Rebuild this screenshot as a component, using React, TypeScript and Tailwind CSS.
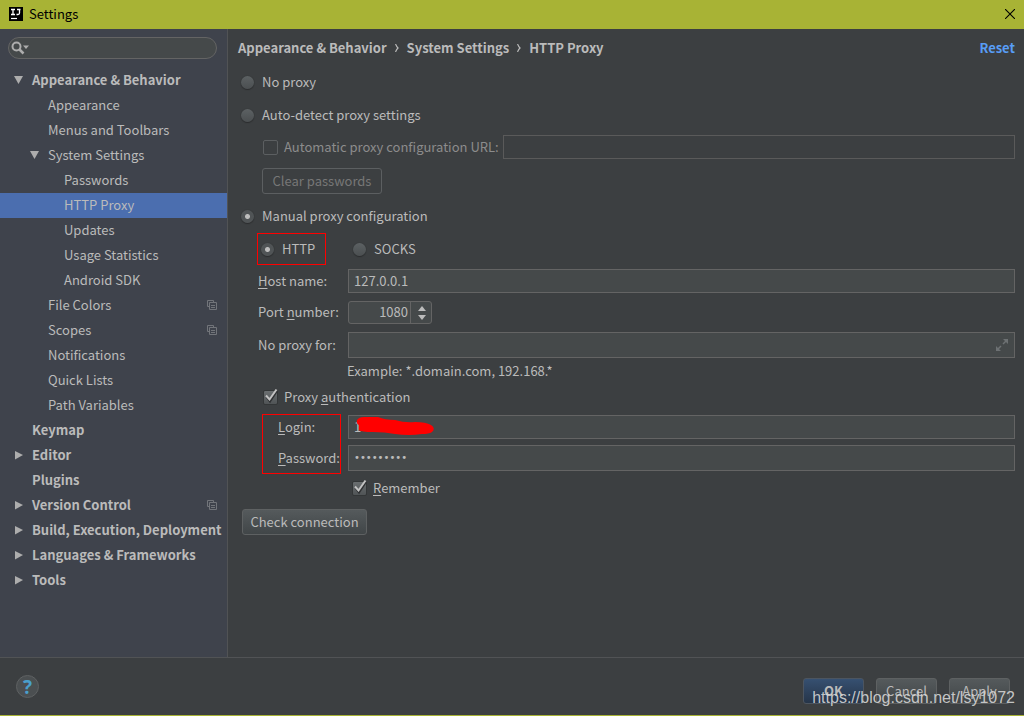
import React, { useState } from "react";

type Item = {
  label: string;
  depth: 0 | 1 | 2;
  bold?: boolean;
  arrow?: "open" | "closed";
  copy?: boolean;
  selected?: boolean;
};

const items: Item[] = [
  { label: "Appearance & Behavior", depth: 0, bold: true, arrow: "open" },
  { label: "Appearance", depth: 1 },
  { label: "Menus and Toolbars", depth: 1 },
  { label: "System Settings", depth: 1, arrow: "open" },
  { label: "Passwords", depth: 2 },
  { label: "HTTP Proxy", depth: 2, selected: true },
  { label: "Updates", depth: 2 },
  { label: "Usage Statistics", depth: 2 },
  { label: "Android SDK", depth: 2 },
  { label: "File Colors", depth: 1, copy: true },
  { label: "Scopes", depth: 1, copy: true },
  { label: "Notifications", depth: 1 },
  { label: "Quick Lists", depth: 1 },
  { label: "Path Variables", depth: 1 },
  { label: "Keymap", depth: 0, bold: true },
  { label: "Editor", depth: 0, bold: true, arrow: "closed" },
  { label: "Plugins", depth: 0, bold: true },
  { label: "Version Control", depth: 0, bold: true, arrow: "closed", copy: true },
  { label: "Build, Execution, Deployment", depth: 0, bold: true, arrow: "closed" },
  { label: "Languages & Frameworks", depth: 0, bold: true, arrow: "closed" },
  { label: "Tools", depth: 0, bold: true, arrow: "closed" },
];

const indent = { 0: "pl-3", 1: "pl-7", 2: "pl-11" };

function TreeArrow({ kind }: { kind?: "open" | "closed" }) {
  return (
    <svg className="mr-2 size-3 shrink-0" viewBox="0 0 12 12" fill="#adadad" aria-hidden="true">
      {kind === "open" && <path d="M2 2h9L6.500 10z" />}
      {kind === "closed" && <path d="M3 2v8.500L11 6z" />}
    </svg>
  );
}

function CopyIcon() {
  return (
    <svg className="size-[10px] shrink-0" viewBox="0 0 10 10" fill="none" stroke="#72757a" aria-hidden="true">
      <path d="M2 6.500H.5v-6h6V2M2.500 2.500h7v7h-7zM4 5.500h4M4 7.500h4" />
    </svg>
  );
}

function Crumb({ children }: { children: React.ReactNode }) {
  return (
    <>
      <svg className="mx-2 h-2 w-1" viewBox="0 0 4 8" fill="none" stroke="#bbbbbb" strokeWidth="1.200" aria-hidden="true">
        <path d="M.5 0Q1.500 2.500 3 4Q1.500 5.500 .5 8" />
      </svg>
      <span>{children}</span>
    </>
  );
}

const field =
  "min-w-0 border border-[#646464] bg-[#45494a] px-[5px] pb-px text-[#bbbbbb] outline-none";
const button =
  "h-[26px] rounded-[3px] border border-[#5e6162] bg-linear-to-b from-[#555a5c] to-[#414648] text-center";

function Radio({
  id,
  name,
  label,
  defaultChecked,
}: {
  id: string;
  name: string;
  label: string;
  defaultChecked?: boolean;
}) {
  return (
    <div className="flex items-center">
      <input
        id={id}
        type="radio"
        name={name}
        defaultChecked={defaultChecked}
        className="mr-2 size-[13px] shrink-0 appearance-none rounded-full bg-linear-to-b from-[#5c6163] to-[#4b4f51] shadow-[0_1px_1px_#2b2d2e,0_0_1px_#2b2d2e] checked:bg-[radial-gradient(circle,#bdbdbd_2px,#505456_3px)]"
      />
      <label htmlFor={id}>{label}</label>
    </div>
  );
}

function Check({
  id,
  children,
  defaultChecked,
  disabled,
}: {
  id: string;
  children: React.ReactNode;
  defaultChecked?: boolean;
  disabled?: boolean;
}) {
  return (
    <div className="flex items-center">
      <span className="relative mr-[6px] flex">
        <input
          id={id}
          type="checkbox"
          defaultChecked={defaultChecked}
          disabled={disabled}
          className="peer size-[15px] appearance-none rounded-[2px] border border-[#333637] bg-linear-to-b from-[#6a6e70] to-[#505456] disabled:border-[#5c5f61] disabled:bg-none"
        />
        <svg
          className="pointer-events-none absolute -top-[2px] left-0 hidden h-[17px] w-[16px] peer-checked:block"
          viewBox="0 0 16 17"
          fill="none"
          aria-hidden="true"
        >
          <path d="M3.500 9l3.500 4.500L14 3" stroke="#303234" strokeWidth="2" />
          <path d="M3 7.500l3.500 4L13.500 1.500" stroke="#c2c2c2" strokeWidth="2" />
        </svg>
      </span>
      <label htmlFor={id} className={disabled ? "text-[#8c8c8c]" : ""}>
        {children}
      </label>
    </div>
  );
}

export default function App() {
  const [port, setPort] = useState(1080);

  return (
    <div className="flex min-h-screen flex-col border-b border-[#a8b335] bg-[#3c3f41] font-['Noto_Sans_CJK_SC','Noto_Sans',sans-serif] text-[13px] leading-5 text-[#bbbbbb]">
      <header className="flex h-[29px] items-center bg-[#a8b335] pr-2 pb-[2px] pl-[9px] text-black">
        <svg className="mr-[6px] size-[14px]" viewBox="0 0 14 14" aria-hidden="true">
          <path d="M0 0h14v14H0z" fill="#000" />
          <path d="M2 2.500h4M4 2.500v5M2 7.500h4M8 2.500h3.500M10.500 2.500v3.500q0 1.500-1.500 1.500H7.500" fill="none" stroke="#fff" strokeWidth="1.300" />
          <path d="M2 11.500h6" stroke="#fff" strokeWidth="1.200" />
        </svg>
        <h1 className="flex-1">Settings</h1>
        <button type="button" aria-label="Close" className="p-px">
          <svg className="size-[10px]" viewBox="0 0 10 10" stroke="#000" strokeWidth="1.100" aria-hidden="true">
            <path d="M0 0l10 10M10 0L0 10" />
          </svg>
        </button>
      </header>

      <div className="flex flex-1">
        <aside className="w-[228px] shrink-0 border-r border-[#515355] bg-[#3f434c] pt-2">
          <div className="mr-[10px] ml-2 flex h-[22px] items-center rounded-full border border-[#646464] bg-[#45494a] pl-[2px]">
            <svg className="h-[14px] w-[19px] shrink-0" viewBox="0 0 19 14" aria-hidden="true">
              <circle cx="5.500" cy="5.500" r="4" fill="none" stroke="#adadad" strokeWidth="2" />
              <path d="M8.500 8.500l4 4" stroke="#adadad" strokeWidth="2.500" />
              <path d="M12 4.500h6l-3 3.500z" fill="#adadad" />
            </svg>
            <input type="search" aria-label="Search settings" className="min-w-0 flex-1 bg-transparent outline-none" />
          </div>
          <nav aria-label="Settings" className="mt-[9px]">
            {items.map((it) => (
              <a
                key={it.label}
                href="#"
                aria-current={it.selected ? "page" : undefined}
                className={`flex h-[25px] items-center pr-[10px] pb-[2px] whitespace-nowrap ${indent[it.depth]} ${it.bold ? "font-bold" : ""} ${it.selected ? "bg-[#4b6eaf]" : ""}`}
              >
                <TreeArrow kind={it.arrow} />
                <span className="flex-1">{it.label}</span>
                {it.copy && <CopyIcon />}
              </a>
            ))}
          </nav>
        </aside>

        <main className="min-w-0 flex-1 pt-[9px] pr-[9px] pl-[10px]">
          <div className="flex items-center justify-between font-bold">
            <div className="flex items-center">
              <span>Appearance &amp; Behavior</span>
              <Crumb>System Settings</Crumb>
              <Crumb>HTTP Proxy</Crumb>
            </div>
            <button type="button" className="text-[#589df6]">Reset</button>
          </div>

          <form className="pl-[3px]" onSubmit={(e) => e.preventDefault()}>
            <div className="mt-[14px]">
              <Radio id="none" name="mode" label="No proxy" />
            </div>
            <div className="mt-[13px]">
              <Radio id="auto" name="mode" label="Auto-detect proxy settings" />
            </div>
            <div className="mt-[10px] flex items-center pl-[22px]">
              <Check id="pac" disabled>Automatic proxy configuration URL:</Check>
              <input
                aria-label="Automatic proxy configuration URL"
                disabled
                className="ml-1 h-6 min-w-0 flex-1 border border-[#5a5a5a] bg-transparent px-[5px]"
              />
            </div>
            <button
              type="button"
              disabled
              className="mt-[9px] ml-[21px] block h-[26px] w-[120px] rounded-[3px] border border-[#5c5f61] text-[#777777]"
            >
              Clear passwords
            </button>
            <div className="mt-3">
              <Radio id="manual" name="mode" label="Manual proxy configuration" defaultChecked />
            </div>

            <div className="pl-4">
              <div className="mt-[7px] flex items-center">
                <div className="flex h-8 w-[69px] items-center border border-[#ff0000] pl-[3px]">
                  <Radio id="http" name="type" label="HTTP" defaultChecked />
                </div>
                <div className="ml-[27px]">
                  <Radio id="socks" name="type" label="SOCKS" />
                </div>
              </div>

              <div className="mt-1 flex items-center">
                <label htmlFor="host" className="w-[91px] pb-px pl-px"><u className="underline-offset-2">H</u>ost name:</label>
                <input id="host" defaultValue="127.0.0.1" className={`${field} h-6 flex-1`} />
              </div>
              <div className="mt-2 flex items-center">
                <label htmlFor="port" className="w-[91px] pb-px pl-px">Port <u className="underline-offset-2">n</u>umber:</label>
                <div className="flex h-[23px] w-[84px] rounded-[3px] border border-[#646464] bg-[#45494a]">
                  <input
                    id="port"
                    value={port}
                    onChange={(e) => setPort(Number(e.target.value) || 0)}
                    className="w-[62px] min-w-0 border-r border-[#646464] bg-transparent pr-[2px] pb-px text-right outline-none"
                  />
                  <div className="flex flex-1 flex-col items-center justify-center gap-1 pl-px">
                    <button type="button" aria-label="Increase port" onClick={() => setPort(port + 1)}>
                      <svg className="h-[5px] w-2" viewBox="0 0 8 5" fill="#bbbbbb" aria-hidden="true"><path d="M0 5h8L4 0z" /></svg>
                    </button>
                    <button type="button" aria-label="Decrease port" onClick={() => setPort(port - 1)}>
                      <svg className="h-[5px] w-2" viewBox="0 0 8 5" fill="#bbbbbb" aria-hidden="true"><path d="M0 0h8L4 5z" /></svg>
                    </button>
                  </div>
                </div>
              </div>
              <div className="mt-2 flex items-center">
                <label htmlFor="skip" className="w-[91px] pb-px pl-px">No proxy for:</label>
                <div className="flex h-[26px] min-w-0 flex-1 items-center border border-[#646464] bg-[#45494a] pr-[6px]">
                  <input id="skip" className="min-w-0 flex-1 bg-transparent px-[5px] outline-none" />
                  <button type="button" aria-label="Expand field">
                    <svg className="size-3" viewBox="0 0 12 12" fill="#6d7173" stroke="#6d7173" aria-hidden="true">
                      <path d="M7 0h5v5zM0 7v5h5z" stroke="none" />
                      <path d="M10 2L7 5M2 10l3-3" strokeWidth="1.500" />
                    </svg>
                  </button>
                </div>
              </div>
              <p className="mt-[3px] ml-[90px]">Example: *.domain.com, 192.168.*</p>

              <div className="mt-[6px] pl-[6px]">
                <Check id="auth" defaultChecked>Proxy <u className="underline-offset-2">a</u>uthentication</Check>
              </div>

              <div className="relative mt-2 flex flex-col gap-[6px]">
                <div className="flex items-center">
                  <label htmlFor="login" className="w-[91px] pb-px pl-[21px]"><u className="underline-offset-2">L</u>ogin:</label>
                  <div className="relative flex min-w-0 flex-1">
                    <input id="login" defaultValue="1" className={`${field} h-6 flex-1`} />
                    <svg className="pointer-events-none absolute top-[2px] left-2 h-[19px] w-[78px]" viewBox="0 0 78 19" fill="#ff0000" aria-hidden="true">
                      <path d="M1 3Q3 0 8 0L22 0Q29 3 39 3Q49 6 59 5Q70 5 75 8Q80 11 76 15Q73 17 66 17Q53 19 39 17Q29 15 17 15Q5 15 3 13L3 8Q0 7 1 3z" />
                    </svg>
                  </div>
                </div>
                <div className="flex items-center">
                  <label htmlFor="password" className="w-[91px] pb-px pl-[21px]"><u className="underline-offset-2">P</u>assword:</label>
                  <input
                    id="password"
                    type="password"
                    defaultValue="123456789"
                    className={`${field} h-[26px] flex-1 font-['DejaVu_Sans',sans-serif] text-[10px]`}
                  />
                </div>
                <div className="pointer-events-none absolute -top-px left-[5px] h-[60px] w-[79px] border border-[#ff0000]" />
              </div>

              <div className="mt-[7px] pl-[95px]">
                <Check id="remember" defaultChecked><u className="underline-offset-2">R</u>emember</Check>
              </div>
            </div>

            <button type="button" className={`${button} mt-[11px] ml-px block w-[125px]`}>Check connection</button>
          </form>
        </main>
      </div>

      <footer className="relative flex h-[58px] items-center border-t border-[#515355] pr-[14px] pl-4">
        <button
          type="button"
          aria-label="Help"
          className="size-[23px] rounded-full border border-[#5e6162] bg-[#4b4f51] font-['Open_Sans',sans-serif] text-[19px] leading-5 font-bold text-[#4a9fcc]"
        >
          ?
        </button>
        <div className="ml-auto flex gap-3 pt-2">
          <button type="button" className="h-[26px] w-[61px] rounded-[3px] border border-[#4c5560] bg-linear-to-b from-[#365071] to-[#263549] font-bold">OK</button>
          <button type="button" className={`${button} w-[61px]`}>Cancel</button>
          <button type="button" className={`${button} w-[61px]`}>Apply</button>
        </div>
        <span className="pointer-events-none absolute right-[9px] bottom-[7px] font-['Liberation_Sans',sans-serif] text-[16px] text-[#d6d6d6]/90">
          https://blog.csdn.net/lsy1072
        </span>
      </footer>
    </div>
  );
}
